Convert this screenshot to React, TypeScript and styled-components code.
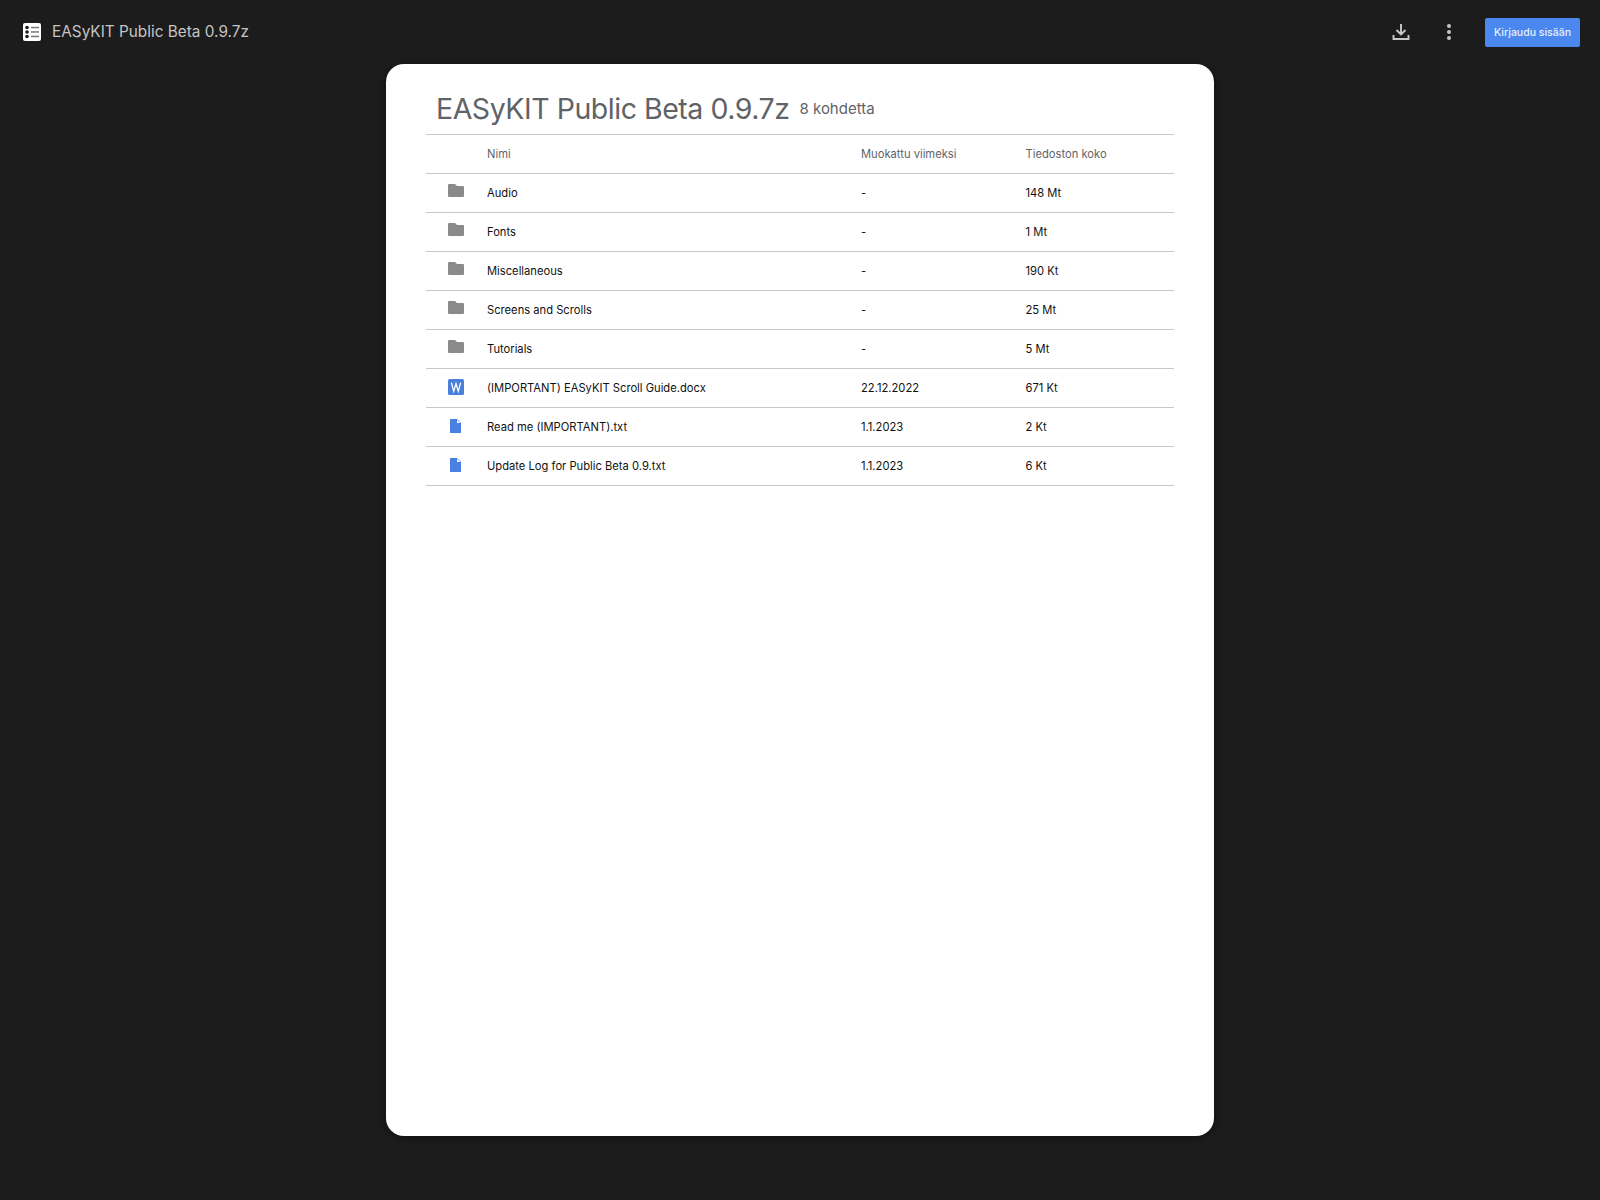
import React from 'react';
import styled, { createGlobalStyle } from 'styled-components';

const GlobalStyle = createGlobalStyle`
    html, body {
        margin: 0;
        padding: 0;
        background: #1c1c1c;
    }

    body {
        font-family: 'Inter', 'Liberation Sans', sans-serif;
    }
`;

const Page = styled.div`
    display: flex;
    flex-direction: column;
    height: 1200px;
    overflow: hidden;
    background: #1c1c1c;
`;

const TopBar = styled.header`
    display: flex;
    align-items: center;
    justify-content: space-between;
    height: 64px;
    padding: 0 20px 0 23px;
`;

const Brand = styled.div`
    display: flex;
    align-items: center;
    gap: 11px;
`;

const BrandName = styled.span`
    margin-bottom: 2px;
    font-size: 15.35px;
    font-weight: 400;
    color: #c4c4c4;
`;

const Actions = styled.div`
    display: flex;
    align-items: center;
`;

const IconButton = styled.button`
    display: flex;
    align-items: center;
    justify-content: center;
    width: 24px;
    height: 24px;
    margin-right: ${(props: { $gap: number }) => props.$gap}px;
    padding: 0;
    border: 0;
    background: none;
    color: #c8c8c8;
`;

const SignIn = styled.button`
    height: 29px;
    width: 95px;
    padding: 0;
    border: 0;
    border-radius: 2px;
    background: #4a87ee;
    color: #e9f0fd;
    font-family: 'Inter', sans-serif;
    font-size: 10.5px;
    font-weight: 500;
`;

const Card = styled.main`
    width: 828px;
    height: 1072px;
    margin: 0 auto;
    padding: 0 40px;
    box-sizing: border-box;
    background: #fff;
    border-radius: 18px;
    box-shadow: 0 2px 10px rgba(0, 0, 0, 0.4);
`;

const Heading = styled.div`
    display: flex;
    align-items: center;
    gap: 10px;
    height: 71px;
    padding: 19px 0 0 10px;
    box-sizing: border-box;
    border-bottom: 1px solid #c8c8c8;
    color: #5f6368;
`;

const Title = styled.h1`
    margin: 0;
    font-size: 28.5px;
    line-height: 36px;
    font-weight: 400;
    letter-spacing: -0.47px;
`;

const Count = styled.span`
    font-size: 15px;
`;

const Row = styled.div`
    display: grid;
    grid-template-columns: 61px 374px 164.5px 1fr;
    align-items: center;
    height: 39px;
    box-sizing: border-box;
    border-bottom: 1px solid #c8c8c8;
    font-size: 11.2px;
    color: ${(props: { $head?: boolean }) => (props.$head ? '#5f6368' : '#111')};
`;

const IconCell = styled.div`
    display: flex;
    justify-content: center;
    margin-top: -3px;
    padding-right: 1px;
`;

const FolderSvg = styled.svg`
    margin-top: -2px;
`;

const DocSvg = styled.svg`
    margin-right: 1px;
`;

const FolderIcon = () => (
    <FolderSvg width="16" height="13" viewBox="0 0 16 13">
        <path
            fill="#8a8a8a"
            d="M1 0h6l2 2h6a1 1 0 0 1 1 1v9a1 1 0 0 1-1 1h-14a1 1 0 0 1-1-1v-11a1 1 0 0 1 1-1z"
        />
    </FolderSvg>
);

const WordIcon = () => (
    <svg width="16" height="16" viewBox="0 0 16 16">
        <rect width="16" height="16" rx="1.5" fill="#4a80dc" />
        <path fill="none" stroke="#fff" strokeWidth="1.3" d="M3.4 3.6l2.3 8.6 2.3-7.4 2.3 7.4 2.3-8.6" />
    </svg>
);

const DocIcon = () => (
    <DocSvg width="11" height="14" viewBox="0 0 11 14">
        <path fill="#4a80e4" d="M0.5 0h6.5l4 4v9.5a0.5 0.5 0 0 1-0.5 0.5h-10a0.5 0.5 0 0 1-0.5-0.5v-13a0.5 0.5 0 0 1 0.5-0.5z" />
        <path fill="#fff" d="M7 0.8l3.2 3.2h-3.2z" />
    </DocSvg>
);

const ListIcon = () => (
    <svg width="18" height="18" viewBox="0 0 18 18">
        <rect width="18" height="18" rx="2" fill="#fff" />
        <circle cx="4" cy="4.5" r="1.8" fill="#1c1c1c" />
        <circle cx="4" cy="9" r="1.8" fill="#1c1c1c" />
        <circle cx="4" cy="13.5" r="1.8" fill="#1c1c1c" />
        <rect x="8" y="3.8" width="8" height="1.5" fill="#777" />
        <rect x="8" y="8.2" width="8" height="1.5" fill="#777" />
        <rect x="8" y="12.7" width="8" height="1.5" fill="#777" />
    </svg>
);

const DownloadIcon = () => (
    <svg width="18" height="18" viewBox="0 0 18 18">
        <path
            fill="none"
            stroke="currentColor"
            strokeWidth="1.9"
            d="M9 1v10M4.5 7l4.5 4.5L13.5 7M1.5 12v4h15v-4"
        />
    </svg>
);

const MoreIcon = () => (
    <svg width="6" height="18" viewBox="0 0 6 18">
        <circle cx="3" cy="3" r="2" fill="currentColor" />
        <circle cx="3" cy="9" r="2" fill="currentColor" />
        <circle cx="3" cy="15" r="2" fill="currentColor" />
    </svg>
);

const files = [
    { kind: 'folder', name: 'Audio', modified: '-', size: '148 Mt' },
    { kind: 'folder', name: 'Fonts', modified: '-', size: '1 Mt' },
    { kind: 'folder', name: 'Miscellaneous', modified: '-', size: '190 Kt' },
    { kind: 'folder', name: 'Screens and Scrolls', modified: '-', size: '25 Mt' },
    { kind: 'folder', name: 'Tutorials', modified: '-', size: '5 Mt' },
    { kind: 'word', name: '(IMPORTANT) EASyKIT Scroll Guide.docx', modified: '22.12.2022', size: '671 Kt' },
    { kind: 'doc', name: 'Read me (IMPORTANT).txt', modified: '1.1.2023', size: '2 Kt' },
    { kind: 'doc', name: 'Update Log for Public Beta 0.9.txt', modified: '1.1.2023', size: '6 Kt' },
];

const fileIcon = (kind: string) => {
    if (kind === 'folder') return <FolderIcon />;
    if (kind === 'word') return <WordIcon />;
    return <DocIcon />;
};

const App = () => {
    return (
        <Page>
            <GlobalStyle />
            <TopBar>
                <Brand>
                    <ListIcon />
                    <BrandName>EASyKIT Public Beta 0.9.7z</BrandName>
                </Brand>
                <Actions>
                    <IconButton $gap={24}>
                        <DownloadIcon />
                    </IconButton>
                    <IconButton $gap={24}>
                        <MoreIcon />
                    </IconButton>
                    <SignIn>Kirjaudu sisään</SignIn>
                </Actions>
            </TopBar>
            <Card>
                <Heading>
                    <Title>EASyKIT Public Beta 0.9.7z</Title>
                    <Count>8 kohdetta</Count>
                </Heading>
                <Row $head>
                    <div />
                    <div>Nimi</div>
                    <div>Muokattu viimeksi</div>
                    <div>Tiedoston koko</div>
                </Row>
                {files.map((file) => (
                    <Row key={file.name}>
                        <IconCell>{fileIcon(file.kind)}</IconCell>
                        <div>{file.name}</div>
                        <div>{file.modified}</div>
                        <div>{file.size}</div>
                    </Row>
                ))}
            </Card>
        </Page>
    );
};

export default App;
